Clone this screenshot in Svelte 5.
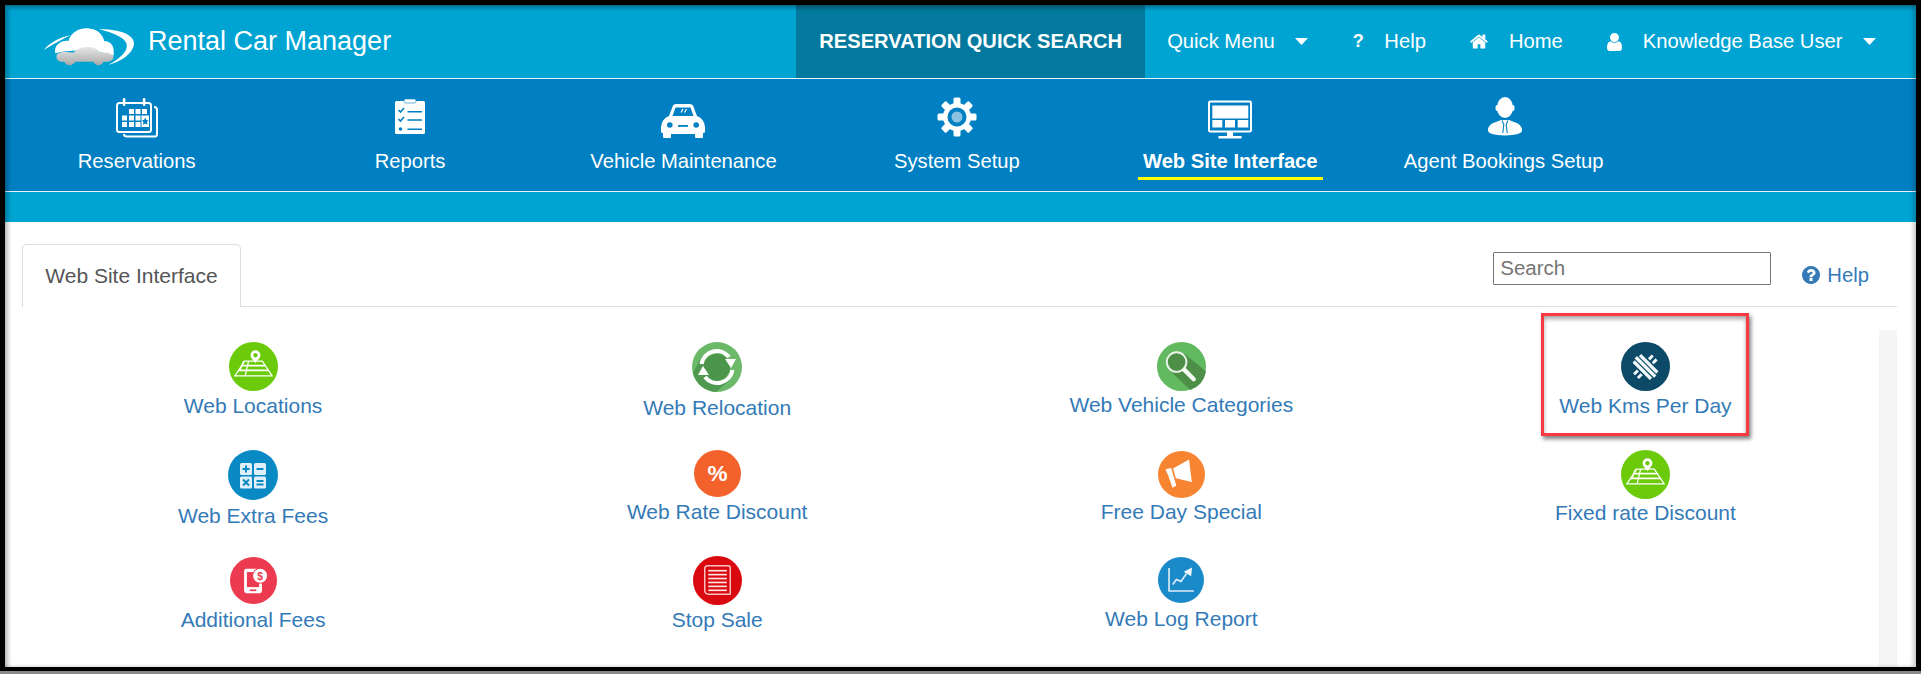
<script>
  const navItems = [
    { icon: 'calendar', label: 'Reservations' },
    { icon: 'reports', label: 'Reports' },
    { icon: 'car', label: 'Vehicle Maintenance' },
    { icon: 'gear', label: 'System Setup' },
    { icon: 'monitor', label: 'Web Site Interface', active: true },
    { icon: 'agent', label: 'Agent Bookings Setup' }
  ];

  // listed row by row, d = icon diameter, gap = space under the icon
  const tiles = [
    { icon: 'map', label: 'Web Locations', d: 49, gap: 3 },
    { icon: 'reload', label: 'Web Relocation', d: 50, gap: 4 },
    { icon: 'search', label: 'Web Vehicle Categories', d: 49, gap: 2 },
    { icon: 'kms', label: 'Web Kms Per Day', d: 49, gap: 3, marked: true },
    { icon: 'calc', label: 'Web Extra Fees', d: 50, gap: 4 },
    { icon: 'percent', label: 'Web Rate Discount', d: 47, gap: 3 },
    { icon: 'horn', label: 'Free Day Special', d: 47, gap: 2, top: 1 },
    { icon: 'map', label: 'Fixed rate Discount', d: 49, gap: 2 },
    { icon: 'phone', label: 'Additional Fees', d: 47, gap: 4 },
    { icon: 'stop', label: 'Stop Sale', d: 49, gap: 3, top: -1 },
    { icon: 'chart', label: 'Web Log Report', d: 46, gap: 4 }
  ];

  const teeth = [0, 45, 90, 135, 180, 225, 270, 315];
  const docLines = [15, 19, 23, 27, 31, 35];
</script>

{#snippet navGlyph(name)}
  <svg class="nav-icon" viewBox="0 0 48 42" aria-hidden="true">
    {#if name === 'calendar'}
      <rect x="4" y="6" width="34" height="29" rx="2.5" fill="none" stroke="#fff" stroke-width="2" />
      <path d="M41 10Q44 10 44 13V37Q44 39.500 42 39.500H14Q11 39.500 11 37" fill="none" stroke="#fff" stroke-width="2" />
      <rect x="9.800" y="1" width="2.600" height="8" rx="1.300" fill="#fff" />
      <rect x="29.800" y="1" width="2.600" height="8" rx="1.300" fill="#fff" />
      <g fill="#fff">
        <rect x="16" y="12" width="5" height="5" /><rect x="22.500" y="12" width="5" height="5" /><rect x="29" y="12" width="5" height="5" />
        <rect x="9" y="18.500" width="5" height="5" /><rect x="16" y="18.500" width="5" height="5" /><rect x="22.500" y="18.500" width="5" height="5" />
        <rect x="9" y="25" width="5" height="5" /><rect x="16" y="25" width="5" height="5" /><rect x="22.500" y="25" width="5" height="5" />
        <rect x="28.500" y="18.500" width="7.500" height="11.500" />
      </g>
      <polygon points="32.200,20.500 33.400,23 35.600,23.300 34,25 34.500,27.800 32.200,26.500 29.900,27.800 30.400,25 28.800,23.300 31,23" fill="#0080c2" />
    {:else if name === 'reports'}
      <rect x="9" y="4" width="30" height="33" rx="1.500" fill="#fff" />
      <rect x="18" y="2" width="12" height="4" rx="1.500" fill="#fff" stroke="#0080c2" stroke-width=".6" />
      <g fill="none" stroke="#0080c2" stroke-width="1.600">
        <path d="M12.500 13l2 2 3.500-4" /><path d="M12.500 22l2 2 3.500-4" />
        <path d="M21.500 14.700H36M21.500 23H36M21.500 32.300H36" />
      </g>
      <circle cx="14.500" cy="32" r="1.800" fill="#0080c2" />
    {:else if name === 'car'}
      <path fill-rule="evenodd" fill="#fff" d="M14 8.500Q15 7 17 7H31Q33 7 34 8.500L38 19Q45.500 22 46 30V35Q46 36 44 36V40Q44 41 43 41H37Q36 41 36 40V37H12V40Q12 41 11 41H5Q4 41 4 40V36Q2 36 2 35V30Q2.500 22 10 19ZM16.500 10.500L13.500 19H34.500L31.500 10.500Z" />
      <path d="M22 15.500L24 12M25.500 15.500L27.500 12" stroke="#fff" stroke-width="1.200" />
      <circle cx="10.800" cy="28" r="2.800" fill="#0080c2" />
      <circle cx="37.200" cy="28" r="2.800" fill="#0080c2" />
      <rect x="19" y="28" width="10" height="1.800" fill="#0080c2" />
    {:else if name === 'gear'}
      <g fill="#fff">
        {#each teeth as angle}
          <rect x="20.500" y="0.500" width="7" height="10" rx="1.500" transform="rotate({angle} 24 20)" />
        {/each}
        <circle cx="24" cy="20" r="14" />
      </g>
      <circle cx="24" cy="20" r="9.500" fill="#0080c2" />
      <circle cx="24" cy="20" r="5.500" fill="#8dc2e2" />
    {:else if name === 'monitor'}
      <rect x="3" y="4.500" width="42" height="30" rx="1.500" fill="none" stroke="#fff" stroke-width="2" />
      <g fill="#fff">
        <rect x="6.300" y="8.500" width="36" height="13" />
        <rect x="6.300" y="23" width="10" height="7.500" /><rect x="19" y="23" width="10" height="7.500" /><rect x="31.700" y="23" width="10.600" height="7.500" />
        <rect x="21" y="35" width="6" height="4" />
        <rect x="12.300" y="39" width="23.400" height="2.600" rx="1" />
      </g>
    {:else if name === 'agent'}
      <g fill="#fff">
        <ellipse cx="25" cy="10.500" rx="8" ry="10.500" />
        <ellipse cx="17" cy="11" rx="1.500" ry="3" /><ellipse cx="33" cy="11" rx="1.500" ry="3" />
        <path d="M8 33.500Q8 27 16 25L21 23H29L34 25Q42 27 42 33.500Q42 38 25 38.500Q8 38 8 33.500Z" />
      </g>
      <path d="M22 23.500L23.800 27.500L22.800 36M28 23.500L26.200 27.500L27.200 36" fill="none" stroke="#0080c2" stroke-width="1.100" />
    {/if}
  </svg>
{/snippet}

{#snippet tileGlyph(name)}
  <svg viewBox="0 0 50 50" aria-hidden="true">
    {#if name === 'map'}
      <circle cx="25" cy="25" r="25" fill="#6bcb0a" />
      <g fill="none" stroke="#fff" stroke-width="1.300">
        <path d="M16 19.500H34L44 34.500H6Z" />
        <path d="M13 24H37M9.500 29H40.500" stroke-width="1.800" />
        <path d="M20 19.500L16.500 34.500M15 19.500L11 29" />
      </g>
      <path d="M27 8.500a5 5 0 0 1 5 5c0 3-3 5-5 8c-2-3-5-5-5-8a5 5 0 0 1 5-5z" fill="#fff" />
      <circle cx="27" cy="13.500" r="2.200" fill="#6bcb0a" />
    {:else if name === 'calc'}
      <circle cx="25" cy="25" r="25" fill="#0a8ac4" />
      <g fill="#dff0f8">
        <rect x="12" y="13" width="12" height="12" rx="1.500" /><rect x="26" y="13" width="12" height="12" rx="1.500" />
        <rect x="12" y="26.500" width="12" height="12" rx="1.500" /><rect x="26" y="26.500" width="12" height="12" rx="1.500" />
      </g>
      <g fill="none" stroke="#0a8ac4" stroke-width="2">
        <path d="M18 15.500V22.500M14.500 19H21.500" /><path d="M28.500 19H35.500" />
        <path d="M15 29.500L21 35.500M21 29.500L15 35.500" /><path d="M28.500 31H35.500M28.500 34.500H35.500" />
      </g>
    {:else if name === 'phone'}
      <circle cx="25" cy="25" r="25" fill="#ec3b50" />
      <rect x="15" y="12.500" width="19" height="26" rx="2.500" fill="#fff" />
      <rect x="18" y="16" width="13" height="16" fill="#ec3b50" />
      <rect x="21" y="34.500" width="7" height="1.800" fill="#ec3b50" />
      <circle cx="32" cy="20" r="8.500" fill="#ec3b50" />
      <circle cx="32" cy="20" r="7.500" fill="#fff" />
      <text class="dollar" x="32" y="24.500" text-anchor="middle">$</text>
    {:else if name === 'reload'}
      <circle cx="25" cy="25" r="25" fill="#6cb96a" />
      <path d="M1 31L10 14L38 38L24 50A25 25 0 0 1 1 31Z" fill="#4f9a50" />
      <circle cx="25" cy="25" r="13" fill="#4c964c" />
      <g fill="none" stroke="#fff" stroke-width="4.200">
        <path d="M9.500 22A15.500 15.500 0 0 1 37 15" />
        <path d="M40.500 28A15.500 15.500 0 0 1 13 35" />
      </g>
      <polygon points="33,17 44,17 39,26" fill="#fff" />
      <polygon points="6,33 17,33 11,24" fill="#fff" />
    {:else if name === 'percent'}
      <circle cx="25" cy="25" r="25" fill="#f4622b" />
      <text class="pct" x="25" y="33" text-anchor="middle">%</text>
    {:else if name === 'stop'}
      <circle cx="25" cy="25" r="25" fill="#d9090f" />
      <path d="M15 10H36Q38 10 38 12V39H16Q12 39 12 35V13Q12 10 15 10Z" fill="none" stroke="#f6c4c4" stroke-width="1.500" />
      <g stroke="#fbe3e3" stroke-width="1.700">
        {#each docLines as y}
          <path d="M15.500 {y}H34.500" />
        {/each}
      </g>
    {:else if name === 'search'}
      <circle cx="25" cy="25" r="25" fill="#62b95f" />
      <path d="M12 28L28 12L50 30A25 25 0 0 1 34 49Z" fill="#4d8f47" />
      <circle cx="20" cy="20.500" r="10" fill="#4d8f47" stroke="#e8f4e6" stroke-width="2" />
      <path d="M28 28.500L37.500 38" stroke="#f4f9f2" stroke-width="4.500" stroke-linecap="round" />
    {:else if name === 'horn'}
      <circle cx="25" cy="25" r="25" fill="#f78430" />
      <polygon points="16,18.500 33,9 36,33 19,29" fill="#fff" />
      <polygon points="8,19.500 14,18 19.500,37 15.500,39 11.500,28" fill="#fff" />
    {:else if name === 'chart'}
      <circle cx="25" cy="25" r="25" fill="#1b8ac9" />
      <path d="M12 12V37H39" fill="none" stroke="#dcedf7" stroke-width="1.800" />
      <path d="M16 30L20 24.500L25 26.500L31 18" fill="none" stroke="#dcedf7" stroke-width="1.800" />
      <polygon points="37,11.500 36,21 28,16" fill="#f3f9fc" />
    {:else if name === 'kms'}
      <circle cx="25" cy="25" r="25" fill="#0c4a67" />
      <g fill="#f4f8fa" transform="rotate(-45 25 25.500)">
        <rect x="18.700" y="13" width="3.400" height="25" /><rect x="23.300" y="11.500" width="3.400" height="28" /><rect x="27.900" y="13" width="3.400" height="25" />
        <rect x="33" y="21" width="5.500" height="3" /><rect x="33" y="26.500" width="5.500" height="3" />
        <rect x="11.500" y="21" width="5.500" height="3" /><rect x="11.500" y="26.500" width="5.500" height="3" />
      </g>
    {/if}
  </svg>
{/snippet}

<div class="frame">
  <header class="topbar">
    <svg class="logo" viewBox="38 20 280 125" aria-hidden="true">
      <defs>
        <linearGradient id="carFill" x1="0" y1="0" x2="0" y2="1">
          <stop offset="0" stop-color="#e6e6e6" />
          <stop offset="1" stop-color="#a9a9a9" />
        </linearGradient>
      </defs>
      <path d="M40 92C60 70 85 55 120 48C95 60 70 75 40 92Z" fill="#fff" />
      <path d="M205 30C270 28 315 48 312 75C308 105 270 128 235 137C270 118 295 95 290 75C285 55 250 40 205 30Z" fill="#fff" />
      <path d="M75 102C70 80 90 62 115 65C120 40 150 22 180 28C205 30 220 50 222 65C245 65 255 85 250 110C200 90 120 90 75 102Z" fill="#fff" />
      <path d="M80 105C90 95 115 98 130 100C150 78 195 78 210 100C225 100 245 100 250 112C252 125 235 130 220 128C215 142 195 142 190 128H135C128 142 108 142 102 128C88 130 74 122 80 105Z" fill="url(#carFill)" />
    </svg>
    <span class="brand">Rental Car Manager</span>
    <div class="quick">RESERVATION QUICK SEARCH</div>
    <nav class="links">
      <span class="link">Quick Menu <svg class="caret" viewBox="0 0 13 7"><polygon points="0,0 13,0 6.500,7" /></svg></span>
      <span class="link"><b class="qmark">?</b> Help</span>
      <span class="link">
        <svg class="home" viewBox="0 128 1664 1536"><path d="M1408 992v480q0 26-19 45t-45 19h-384v-384h-256v384h-384q-26 0-45-19t-19-45v-480q0-1 .5-3t.5-3l575-474 575 474q1 2 1 6zm223-69l-62 74q-8 9-21 11h-3q-13 0-21-7l-692-577-692 577q-12 8-24 7-13-2-21-11l-62-74q-8-10-7-23.500t11-21.500l719-599q32-26 76-26t76 26l244 204v-195q0-14 9-23t23-9h192q14 0 23 9t9 23v408l219 182q10 8 11 21.500t-7 23.500z" /></svg>
        Home
      </span>
      <span class="link">
        <svg class="user" viewBox="256 128 1280 1536"><path d="M1536 1399q0 109-62.500 187t-150.500 78h-854q-88 0-150.500-78t-62.500-187q0-85 8.500-160.500t31.500-152 58.500-131 94-89 134.500-34.500q131 128 313 128t313-128q76 0 134.500 34.500t94 89 58.500 131 31.500 152 8.500 160.500zm-256-887q0 159-112.500 271.500t-271.500 112.500-271.500-112.500-112.500-271.500 112.500-271.500 271.500-112.500 271.500 112.500 112.500 271.500z" /></svg>
        Knowledge Base User
        <svg class="caret" viewBox="0 0 13 7"><polygon points="0,0 13,0 6.500,7" /></svg>
      </span>
    </nav>
  </header>

  <nav class="mainnav">
    {#each navItems as item}
      <div class="navitem">
        {@render navGlyph(item.icon)}
        <span class="navlabel" class:active={item.active}>{item.label}</span>
      </div>
    {/each}
  </nav>

  <div class="band"></div>

  <main class="page">
    <div class="tabrow">
      <div class="tab">Web Site Interface</div>
      <input class="search" type="text" placeholder="Search" />
      <a class="help" href="#help">
        <svg viewBox="128 128 1536 1536"><path d="M1024 1376v-192q0-14-9-23t-23-9h-192q-14 0-23 9t-9 23v192q0 14 9 23t23 9h192q14 0 23-9t9-23zm256-672q0-88-55.500-163t-138.500-116-170-41q-243 0-371 213-15 24 8 42l132 100q7 6 19 6 16 0 25-12 53-68 86-92 34-24 86-24 48 0 85.500 26t37.500 59q0 38-20 61t-68 45q-63 28-115.500 86.500t-52.500 125.500v36q0 14 9 23t23 9h192q14 0 23-9t9-23q0-19 21.500-49.500t54.500-49.500q32-18 49-28.500t46-35 44.500-48 28-60.500 12.500-81zm384 192q0 209-103 385.500t-279.500 279.500-385.500 103-385.500-103-279.500-279.500-103-385.500 103-385.500 279.500-279.500 385.500-103 385.500 103 279.500 279.500 103 385.500z" /></svg>
        Help
      </a>
    </div>

    <div class="panel">
      <div class="tiles">
        {#each tiles as tile}
          <div class="tile">
            <span class="disc" style="width:{tile.d}px;height:{tile.d}px;margin-top:{tile.top ?? 0}px;margin-bottom:{tile.gap}px">
              {@render tileGlyph(tile.icon)}
            </span>
            <a class="tilelabel" href="#tile">{tile.label}</a>
            {#if tile.marked}<span class="callout"></span>{/if}
          </div>
        {/each}
      </div>
      <div class="track"></div>
    </div>
  </main>

  <div class="vignette"></div>
</div>

<style>
  :global(body) {
    margin: 0;
    background: #8a8a8a;
  }

  .frame {
    position: relative;
    box-sizing: border-box;
    width: 1921px;
    height: 671px;
    border: 5px solid #000;
    border-bottom-width: 4px;
    background: #fff;
    overflow: hidden;
    display: flex;
    flex-direction: column;
    font-family: "Liberation Sans", Arial, sans-serif;
    color: #fff;
  }

  .vignette {
    position: absolute;
    inset: 0;
    pointer-events: none;
    box-shadow: inset 3px 3px 4px rgba(0, 0, 0, .28), inset -3px 0 4px rgba(0, 0, 0, .2);
  }

  /* top bar */
  .topbar {
    height: 73px;
    flex: none;
    display: flex;
    align-items: center;
    background: #00a4d3;
    border-bottom: 1px solid #e6f6fb;
  }

  .logo {
    width: 93px;
    height: 41.500px;
    margin: 11px 0 0 38px;
    flex: none;
  }

  .brand {
    font-size: 27px;
    margin-left: 12px;
  }

  .quick {
    margin-left: auto;
    width: 349px;
    height: 100%;
    display: flex;
    align-items: center;
    justify-content: center;
    background: #03799e;
    font-size: 20.100px;
    font-weight: bold;
  }

  .links {
    display: flex;
    align-items: center;
    gap: 44.500px;
    margin-left: 22px;
    padding-right: 40px;
    font-size: 20.200px;
  }

  .link {
    display: flex;
    align-items: center;
    gap: 20.500px;
    white-space: nowrap;
  }

  .caret {
    width: 13px;
    height: 7px;
    fill: #fff;
  }

  .qmark {
    font-size: 18px;
    width: 11px;
  }

  .home {
    width: 18px;
    height: 17px;
    fill: #fff;
  }

  .user {
    width: 15px;
    height: 18px;
    fill: #fff;
  }

  /* main nav */
  .mainnav {
    height: 113px;
    flex: none;
    margin-left: -5px;
    box-sizing: border-box;
    padding-top: 18px;
    display: grid;
    grid-template-columns: repeat(6, 273.400px);
    background: #0080c2;
    border-bottom: 1px solid #e6f6fb;
  }

  .navitem {
    display: flex;
    flex-direction: column;
    align-items: center;
  }

  .nav-icon {
    width: 48px;
    height: 42px;
    margin-bottom: 10px;
  }

  .navlabel {
    font-size: 20.200px;
    line-height: 24px;
    white-space: nowrap;
  }

  .navlabel.active {
    font-weight: bold;
    padding: 0 5px 4px;
    border-bottom: 3px solid #ffff00;
  }

  .band {
    height: 30px;
    flex: none;
    background: #00a4d3;
  }

  /* page body */
  .page {
    flex: 1;
    min-height: 0;
    display: flex;
    flex-direction: column;
  }

  .tabrow {
    height: 85px;
    flex: none;
    box-sizing: border-box;
    margin: 0 19px 0 17px;
    padding-top: 22px;
    display: flex;
    align-items: flex-start;
    border-bottom: 1px solid #ddd;
  }

  .tab {
    box-sizing: border-box;
    width: 219px;
    height: 63px;
    line-height: 62px;
    text-align: center;
    font-size: 21px;
    color: #555;
    background: #fff;
    border: 1px solid #ddd;
    border-bottom: none;
    border-radius: 5px 5px 0 0;
  }

  .search {
    box-sizing: border-box;
    width: 278px;
    height: 33px;
    margin: 8px 0 0 auto;
    padding: 0 6px 2px;
    font: 20.500px "Liberation Sans", Arial, sans-serif;
    color: #555;
    background: #fff;
    border: 1px solid #767676;
    border-radius: 1px;
  }

  .help {
    display: flex;
    align-items: center;
    gap: 7px;
    margin: 19px 28px 0 31px;
    height: 24px;
    font-size: 20.300px;
    color: #337ab7;
    text-decoration: none;
  }

  .help svg {
    width: 18px;
    height: 18px;
    fill: #337ab7;
  }

  .panel {
    flex: 1;
    min-height: 0;
    display: flex;
    margin: 23px 19px 0 16px;
  }

  .tiles {
    flex: 1;
    display: grid;
    grid-template-columns: repeat(4, 1fr);
    grid-auto-rows: 107.500px;
    padding-right: 1.500px;
  }

  .tile {
    position: relative;
    display: flex;
    flex-direction: column;
    align-items: center;
    padding-top: 12px;
  }

  .disc {
    display: block;
    flex: none;
  }

  .disc svg {
    display: block;
    width: 100%;
    height: 100%;
  }

  .tilelabel {
    font-size: 21px;
    line-height: 24px;
    color: #337ab7;
    text-decoration: none;
    white-space: nowrap;
  }

  .dollar {
    font: bold 11px "Liberation Sans", Arial, sans-serif;
    fill: #ec3b50;
  }

  .pct {
    font: bold 24px "Liberation Sans", Arial, sans-serif;
    fill: #fff;
  }

  .callout {
    position: absolute;
    top: -17px;
    left: 50%;
    margin-left: -104px;
    width: 208px;
    height: 123px;
    box-sizing: border-box;
    border: 3px solid #f9383f;
    box-shadow: 2px 3px 4px rgba(0, 0, 0, .5), inset 0 3px 4px rgba(0, 0, 0, .35);
    pointer-events: none;
  }

  .track {
    width: 18px;
    flex: none;
    background: #f5f5f5;
  }
</style>
